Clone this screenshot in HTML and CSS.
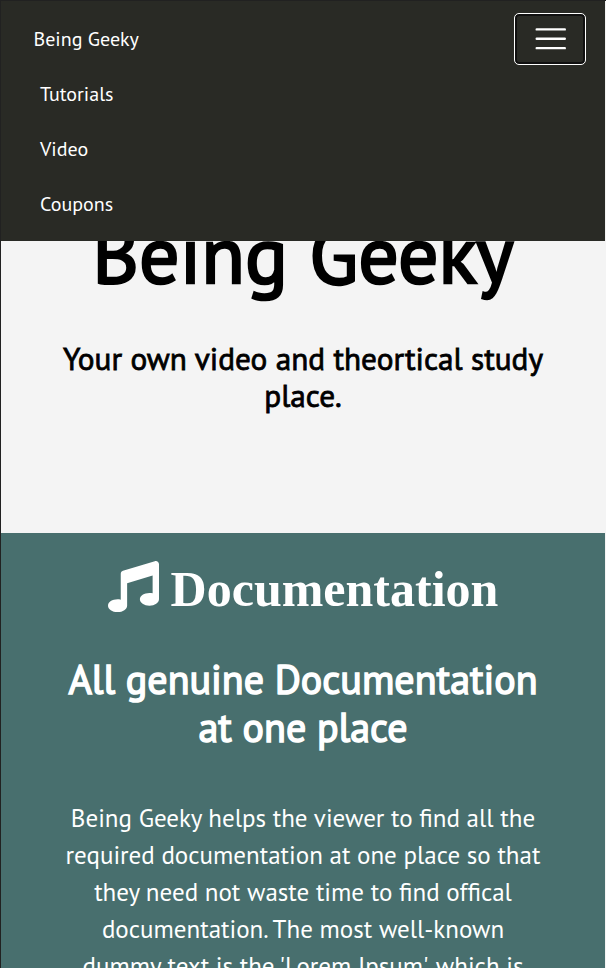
FILE: index.html
```html
<!DOCTYPE html>
<html lang="en">
<head>
<meta charset="utf-8">
<title>Being Geeky</title>
<link rel="stylesheet" href="styles.css">
</head>
<body>
<nav class="navbar">
  <div class="navbar-top">
    <a class="brand">Being Geeky</a>
    <button class="toggler" aria-label="Toggle navigation">
      <svg width="37.5" height="37.5" viewBox="0 0 32 32"><path d="M4 8h24M4 16h24M4 24h24" stroke="#fff" stroke-width="2" stroke-linecap="round"/></svg>
    </button>
  </div>
  <ul class="menu">
    <li><a>Tutorials</a></li>
    <li><a>Video</a></li>
    <li><a>Coupons</a></li>
  </ul>
</nav>
<header class="hero">
  <h1>Being Geeky</h1>
  <h3>Your own video and theortical study place.</h3>
</header>
<section class="docs">
  <h2 class="docs-title"><svg width="51" height="51" viewBox="0 0 512 512"><path fill="#fff" d="M512 32v352c0 36-43 64-96 64s-96-28-96-64 43-64 96-64c11 0 22 1 32 4V146L192 223v225c0 36-43 64-96 64S0 484 0 448s43-64 96-64c11 0 22 1 32 4V128c0-14 9-26 22-30L470 2c21-7 42 9 42 30z"/></svg><span>Documentation</span></h2>
  <h2 class="docs-sub">All genuine Documentation<br>at one place</h2>
  <p>Being Geeky helps the viewer to find all the required documentation at one place so that they need not waste time to find offical documentation. The most well-known dummy text is the 'Lorem Ipsum', which is</p>
</section>
</body>
</html>
```
FILE: styles.css
```css
* { box-sizing: border-box; }
html { background: #212121; }
body {
  margin: 0;
  padding: 1px 0 0 1px;
  height: 968px;
  overflow: hidden;
  font-family: "PT Sans", sans-serif;
}
h1, h2, h3, p, ul { margin: 0; padding: 0; }
.navbar, .hero, .docs { border-right: 1px solid #f4f4f4; }
.navbar {
  position: relative;
  z-index: 1;
  height: 240px;
  background: #292a25;
  color: #fff;
  font-size: 20px;
}
.navbar-top {
  display: flex;
  align-items: center;
  justify-content: space-between;
  height: 66px;
  padding: 10px 19px 0 32.5px;
}
.toggler {
  display: flex;
  align-items: center;
  justify-content: center;
  width: 72px;
  height: 52px;
  padding: 0 0 1px 1px;
  background: none;
  border: 1px solid #fff;
  border-radius: 5px;
  box-shadow: inset 0 0 0 2px #101010;
}
.menu { list-style: none; padding: 0 39px; }
.menu li { height: 55px; line-height: 55px; }
.hero {
  display: flow-root;
  height: 292px;
  padding: 0 50px;
  background: #f4f4f4;
  color: #000;
  text-align: center;
}
.hero h1 {
  margin-top: -32px;
  font-size: 80px;
  line-height: 90px;
  font-weight: 400;
  white-space: nowrap;
  -webkit-text-stroke: 2.5px currentColor;
}
.hero h3 {
  margin-top: 41px;
  font-size: 31.25px;
  line-height: 37px;
  font-weight: 400;
  -webkit-text-stroke: 0.8px currentColor;
}
.docs {
  height: 435px;
  overflow: hidden;
  padding: 0 60px;
  background: #486f6e;
  color: #fff;
  text-align: center;
}
.docs-title {
  display: flex;
  justify-content: center;
  gap: 12px;
  padding-top: 28px;
  font: bold 50px/57px "Liberation Serif", serif;
}
.docs-sub {
  margin-top: 37px;
  font-size: 40px;
  line-height: 48px;
  font-weight: 400;
  white-space: nowrap;
  -webkit-text-stroke: 1.5px currentColor;
}
.docs p { margin-top: 49px; font-size: 25px; line-height: 37px; }
```
